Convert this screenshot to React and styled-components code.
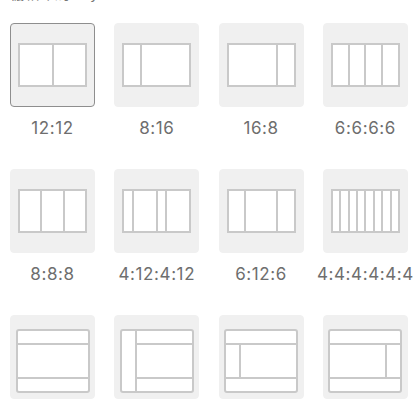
import React from "react"
import styled, { createGlobalStyle } from "styled-components"

const GlobalStyle = createGlobalStyle`
  body {
    margin: 0;
    background: #ffffff;
    font-family: "Liberation Sans", "Noto Sans CJK SC", sans-serif;
  }
`

const Page = styled.div`
  padding: 0 0 0 10px;
  overflow: hidden;
  height: 420px;
`

const Heading = styled.div`
  margin-top: -14px;
  height: 37px;
  font-size: 15px;
  line-height: 16px;
  color: #777;
`

const Grid = styled.div`
  display: grid;
  grid-template-columns: repeat(4, 85px);
  column-gap: 19.3px;
  row-gap: 31px;
`

const Cell = styled.div`
  display: flex;
  flex-direction: column;
  align-items: center;
`

const Tile = styled.div`
  width: 85px;
  height: 84px;
  box-sizing: border-box;
  background: #f0f0f0;
  border-radius: 4px;
  border: 1px solid ${(p) => (p.active ? "#8e8e8e" : "#f0f0f0")};
  display: flex;
  justify-content: center;
  align-items: ${(p) => (p.frame ? "flex-start" : "center")};
  padding-top: ${(p) => (p.frame ? "13px" : "0")};
`

const Columns = styled.div`
  width: 69px;
  height: 44px;
  box-sizing: border-box;
  border: 2px solid #c9c9c9;
  background: #fff;
  display: flex;
`

const Col = styled.div`
  flex: ${(p) => p.size};
  background: #fff;
  & + & {
    border-left: 2px solid #c9c9c9;
  }
`

const Frame = styled.div`
  width: 74px;
  height: 64px;
  box-sizing: border-box;
  border: 2px solid #c9c9c9;
  border-radius: 3px;
  background: #fff;
  display: flex;
  flex-direction: ${(p) => (p.row ? "row" : "column")};
`

const Band = styled.div`
  height: 12px;
  flex: none;
  &:first-child {
    border-bottom: 2px solid #c9c9c9;
  }
  &:last-child {
    border-top: 2px solid #c9c9c9;
  }
`

const Middle = styled.div`
  flex: 1;
  display: flex;
  flex-direction: ${(p) => (p.column ? "column" : "row")};
`

const Side = styled.div`
  width: 13px;
  flex: none;
  border-${(p) => (p.right ? "left" : "right")}: 2px solid #c9c9c9;
`

const Main = styled.div`
  flex: 1;
`

const Label = styled.div`
  margin-top: 11px;
  font-family: Inter, "Liberation Sans", sans-serif;
  font-size: 17px;
  line-height: 20px;
  color: #6e6e6e;
  letter-spacing: 0.6px;
  white-space: nowrap;
`

const columnLayouts = [
  { name: "12:12", cols: [1, 1] },
  { name: "8:16", cols: [1, 3] },
  { name: "16:8", cols: [3, 1] },
  { name: "6:6:6:6", cols: [1, 1, 1, 1] },
  { name: "8:8:8", cols: [1, 1, 1] },
  { name: "4:12:4:12", cols: [1, 3, 1, 3] },
  { name: "6:12:6", cols: [1, 2, 1] },
  { name: "4:4:4:4:4:4", cols: [1, 1, 1, 1, 1, 1, 1, 1] },
]

const frameLayouts = [
  { name: "top-bottom", side: null },
  { name: "side-left-full", side: "full" },
  { name: "side-left", side: "left" },
  { name: "side-right", side: "right" },
]

const FrameDiagram = ({ side }) => {
  if (side === "full") {
    return (
      <Frame row>
        <Side />
        <Middle column>
          <Band />
          <Main />
          <Band />
        </Middle>
      </Frame>
    )
  }
  return (
    <Frame>
      <Band />
      <Middle>
        {side === "left" && <Side />}
        <Main />
        {side === "right" && <Side right />}
      </Middle>
      <Band />
    </Frame>
  )
}

const App = () => {
  return (
    <Page>
      <GlobalStyle />
      <Heading>栅格布局 Layout</Heading>
      <Grid>
        {columnLayouts.map((l, i) => (
          <Cell key={l.name}>
            <Tile active={i === 0}>
              <Columns>
                {l.cols.map((c, j) => (
                  <Col key={j} size={c} />
                ))}
              </Columns>
            </Tile>
            <Label>{l.name}</Label>
          </Cell>
        ))}
        {frameLayouts.map((l) => (
          <Cell key={l.name}>
            <Tile frame>
              <FrameDiagram side={l.side} />
            </Tile>
          </Cell>
        ))}
      </Grid>
    </Page>
  )
}

export default App
